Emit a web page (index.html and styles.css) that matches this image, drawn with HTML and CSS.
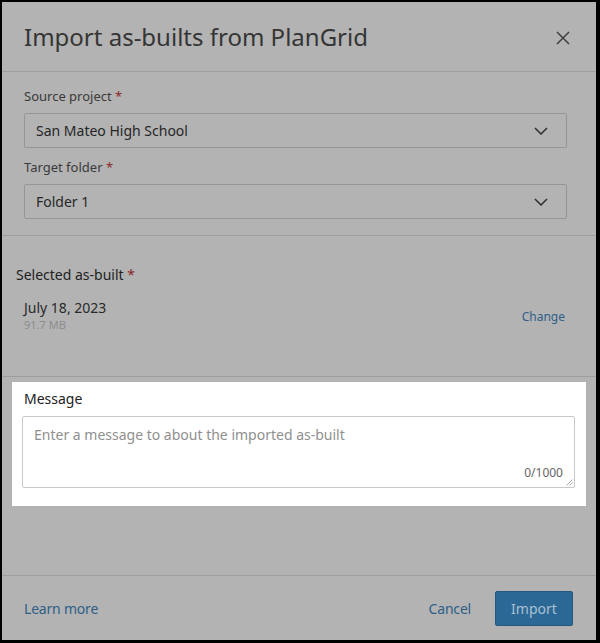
FILE: index.html
```html
<!DOCTYPE html>
<html>
<head>
<meta charset="utf-8">
<link rel="stylesheet" href="styles.css">
</head>
<body>
<div class="frame">
  <div class="dialog">
    <header class="head">
      <h1 class="title">Import as-builts from PlanGrid</h1>
      <svg class="close" width="14" height="14" viewBox="0 0 14 14"><path d="M1 1 L13 13 M13 1 L1 13" stroke="#3f3f3f" stroke-width="1.5" fill="none"/></svg>
    </header>
    <section class="form">
      <div class="label">Source project <span class="req">*</span></div>
      <div class="select"><span>San Mateo High School</span>
        <svg width="14" height="8" viewBox="0 0 14 8"><path d="M1 1 L7 7 L13 1" stroke="#2f2f2f" stroke-width="1.5" fill="none"/></svg></div>
      <div class="label second">Target folder <span class="req">*</span></div>
      <div class="select"><span>Folder 1</span>
        <svg width="14" height="8" viewBox="0 0 14 8"><path d="M1 1 L7 7 L13 1" stroke="#2f2f2f" stroke-width="1.5" fill="none"/></svg></div>
    </section>
    <section class="selected">
      <div class="sel-title">Selected as-built <span class="req">*</span></div>
      <div class="item">
        <div class="item-info">
          <div class="item-name">July 18, 2023</div>
          <div class="item-size">91.7 MB</div>
        </div>
        <a class="link change">Change</a>
      </div>
    </section>
    <section class="message-wrap">
      <div class="message">
        <div class="msg-label">Message</div>
        <div class="textarea">
          <div class="placeholder">Enter a message to about the imported as-built</div>
          <div class="count">0/1000</div>
          <svg class="grip" width="7" height="7" viewBox="0 0 7 7"><path d="M6.5 0.5 L0.5 6.5 M6.5 3.5 L3.5 6.5" stroke="#aaa" stroke-width="1" fill="none"/></svg>
        </div>
      </div>
    </section>
    <div class="spacer"></div>
    <footer class="foot">
      <a class="link learn">Learn more</a>
      <div class="actions">
        <a class="link cancel">Cancel</a>
        <button class="btn">Import</button>
      </div>
    </footer>
  </div>
</div>
</body>
</html>
```
FILE: styles.css
```css
html, body {
  margin: 0;
  padding: 0;
  background: #000;
}
body {
  font-family: "Noto Sans", "Open Sans", sans-serif;
  color: #2b2b2b;
}
.frame {
  width: 600px;
  height: 643px;
  box-sizing: border-box;
  padding: 2px 4px 3px 2px;
  background: #000;
}
.dialog {
  height: 100%;
  background: #b3b3b3;
  display: flex;
  flex-direction: column;
}
.head {
  height: 69px;
  display: flex;
  align-items: center;
  justify-content: space-between;
  padding: 0 26px 0 22px;
  border-bottom: 1px solid #9e9e9e;
  flex: none;
}
.title {
  margin: 0;
  font-weight: 400;
  font-size: 24px;
  color: #353535;
  letter-spacing: 0;
}
.close { margin-top: 2px; }
.form {
  padding: 15px 29px 16px 22px;
  border-bottom: 1px solid #9e9e9e;
  flex: none;
}
.label {
  font-size: 13px;
  line-height: 18px;
  color: #3a3a3a;
  margin-bottom: 8px;
}
.label.second { margin-top: 10px; }
.req { color: #8a2a2a; }
.select {
  height: 35px;
  box-sizing: border-box;
  border: 1px solid #969696;
  border-radius: 2px;
  display: flex;
  align-items: center;
  justify-content: space-between;
  padding: 0 18px 0 11px;
  font-size: 14px;
  color: #262626;
}
.selected {
  height: 141px;
  box-sizing: border-box;
  padding: 30px 31px 0 14px;
  border-bottom: 1px solid #9e9e9e;
  flex: none;
}
.sel-title {
  font-size: 14px;
  line-height: 18px;
  color: #222;
}
.item {
  display: flex;
  align-items: center;
  justify-content: space-between;
  padding: 15px 0 0 8px;
}
.item-name { font-size: 14px; line-height: 18px; color: #2a2a2a; }
.item-size { font-size: 11px; line-height: 16px; color: #8c8c8c; }
.link { color: #2f5f88; text-decoration: none; }
.change { font-size: 12px; margin-top: 1px; }
.message-wrap {
  padding: 5px 10px 0 10px;
  flex: none;
}
.message {
  background: #fff;
  height: 124px;
  box-sizing: border-box;
  padding: 7px 11px 0 10px;
}
.msg-label {
  font-size: 14px;
  line-height: 20px;
  color: #222;
  margin: 0 0 7px 2px;
}
.textarea {
  position: relative;
  height: 72px;
  box-sizing: border-box;
  border: 1px solid #c8c8c8;
  border-radius: 2px;
}
.placeholder {
  position: absolute;
  left: 11px;
  top: 8px;
  font-size: 14px;
  color: #8f8f8f;
}
.count {
  position: absolute;
  right: 11px;
  bottom: 6px;
  font-size: 12px;
  color: #666;
}
.grip { position: absolute; right: 1px; bottom: 1px; }
.spacer {
  flex: 1;
  border-bottom: 1px solid #9e9e9e;
}
.foot {
  height: 64px;
  flex: none;
  display: flex;
  align-items: center;
  justify-content: space-between;
  padding: 0 23px 0 22px;
}
.learn { font-size: 14px; letter-spacing: -0.2px; }
.actions { display: flex; align-items: center; gap: 24px; }
.cancel { font-size: 14px; letter-spacing: -0.2px; }
.btn {
  width: 78px;
  height: 35px;
  background: #2c6895;
  border: 1px solid #24587f;
  border-radius: 2px;
  color: #a9c0d3;
  font-family: inherit;
  font-size: 14px;
  padding: 0;
}
```
